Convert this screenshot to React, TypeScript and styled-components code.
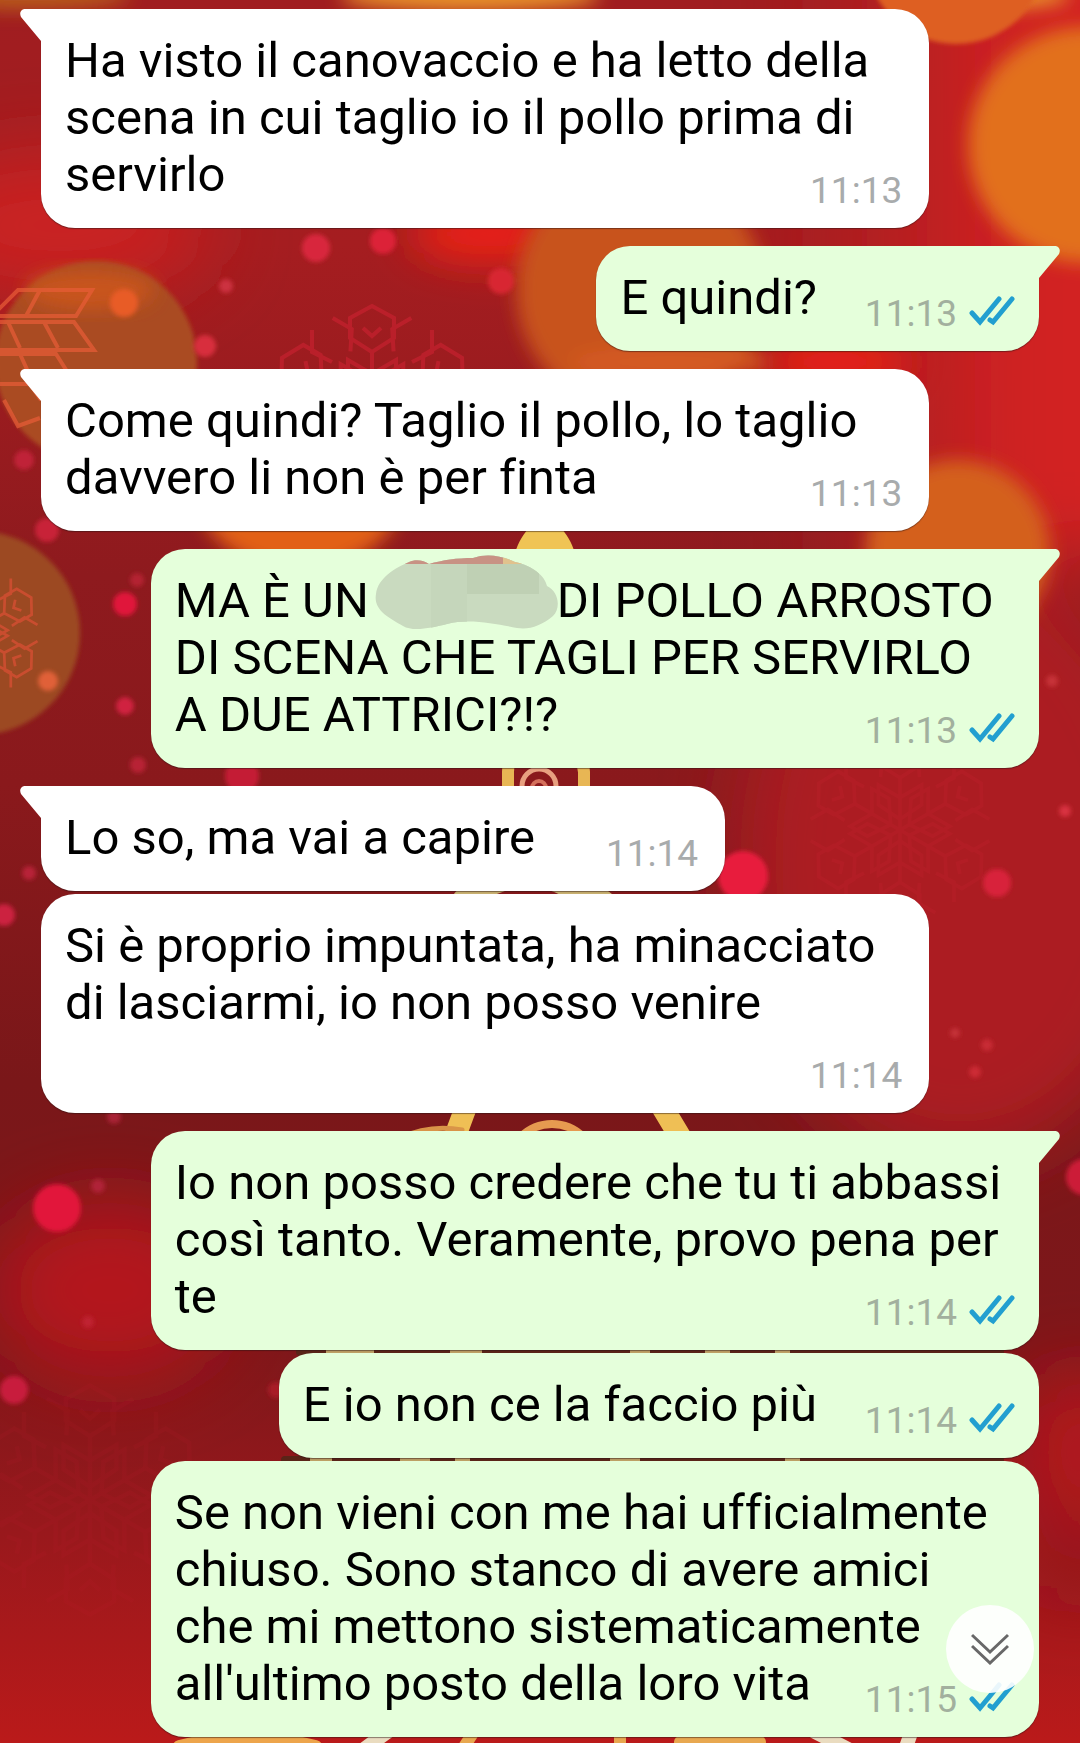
import React from "react";
import styled, { createGlobalStyle, css } from "styled-components";

const GlobalStyle = createGlobalStyle`
  * { box-sizing: border-box; }
  body { margin: 0; background: #a31c20; }
`;

const Screen = styled.main`
  position: relative;
  min-height: 100vh;
  padding: 9px 41px 6px;
  overflow: hidden;
  font-family: Roboto, "Liberation Sans", sans-serif;
`;

const WallpaperArt = styled.svg`
  position: absolute;
  inset: 0;
  width: 100%;
  height: 100%;
`;

const Thread = styled.ol`
  position: relative;
  display: flex;
  flex-direction: column;
  margin: 0;
  padding: 0;
  list-style: none;
`;

const Bubble = styled.li<{ $mine: boolean; $first: boolean; $wide: boolean }>`
  position: relative;
  display: grid;
  align-self: ${(p) => (p.$mine ? "flex-end" : "flex-start")};
  width: ${(p) => (p.$wide ? "89%" : "auto")};
  margin-top: ${(p) => (p.$first ? 18 : 3)}px;
  padding: 23px 24px 25px;
  border-radius: 34px;
  background: ${(p) => (p.$mine ? "#e5ffdb" : "#ffffff")};
  color: #000;
  box-shadow: 0 1px 1px rgba(40, 20, 20, 0.5);
  &:first-child { margin-top: 0; }
  ${(p) =>
    p.$first &&
    (p.$mine
      ? css`border-top-right-radius: 0;`
      : css`border-top-left-radius: 0;`)}
`;

const Tail = styled.svg<{ $mine: boolean }>`
  position: absolute;
  top: 0;
  width: 22px;
  height: 34px;
  ${(p) =>
    p.$mine
      ? css`right: -21px; fill: #e5ffdb;`
      : css`left: -21px; fill: #ffffff; transform: scaleX(-1);`}
`;

const Text = styled.p<{ $reserve: number }>`
  grid-area: 1 / 1;
  margin: 0;
  padding-right: ${(p) => p.$reserve}px;
  font-size: 49px;
  line-height: 57px;
  font-variant-ligatures: none;
  white-space: nowrap;
`;

const Line = styled.span`
  display: block;
  min-height: 57px;
`;

const Meta = styled.div<{ $mine: boolean }>`
  grid-area: 1 / 1;
  place-self: end;
  display: flex;
  align-items: center;
  gap: 12px;
  margin: 0 ${(p) => (p.$mine ? 0 : 3)}px -9px 0;
`;

const Time = styled.time<{ $mine: boolean }>`
  font-size: 37px;
  line-height: 42px;
  color: ${(p) => (p.$mine ? "#a2b09e" : "#a8abac")};
`;

const Ticks = styled.svg`
  width: 46px;
  height: 30px;
  margin-bottom: 6px;
`;

const RedactionArt = styled.svg`
  display: inline-block;
  width: 184px;
  height: 57px;
  margin-left: 4px;
  vertical-align: top;
  overflow: visible;
`;

const ScrollButton = styled.button`
  position: absolute;
  right: 46px;
  bottom: 50px;
  display: grid;
  place-items: center;
  width: 88px;
  height: 88px;
  padding: 0;
  border: 0;
  border-radius: 50%;
  background: rgba(255, 255, 255, 0.9);
`;

const Redaction = () => (
  <RedactionArt viewBox="4 0 184 57" aria-hidden="true">
    <defs>
      <clipPath id="smudge">
        <path d="M7 22 C9 6 26 -4 40 -10 C46 -13 55 -12 60 -8 C74 -12 88 -14 104 -14 C118 -19 134 -16 146 -10 C164 -6 176 4 178 14 C190 20 192 36 184 44 C172 54 160 58 148 56 C128 52 100 46 78 52 C62 56 44 60 34 54 C20 46 4 38 7 22 Z" />
      </clipPath>
    </defs>
    <g clipPath="url(#smudge)">
      <rect x="0" y="-20" width="190" height="82" fill="#c9dabf" />
      <rect x="62" y="-20" width="36" height="82" fill="#c5d6bb" />
      <rect x="98" y="-20" width="72" height="42" fill="#bfd0b4" />
      <rect x="0" y="-20" width="134" height="12" fill="#c89284" />
      <rect x="134" y="-20" width="20" height="12" fill="#e1c28d" />
    </g>
  </RedactionArt>
);

const Flake = ({ x, y, r, color, opacity }: { x: number; y: number; r: number; color: string; opacity: number }) => (
  <g transform={`translate(${x} ${y})`} stroke={color} strokeWidth="4" fill="none" opacity={opacity}>
    {[0, 60, 120, 180, 240, 300].map((a) => (
      <path
        key={a}
        transform={`rotate(${a}) scale(${r / 100})`}
        d="M0 0V-58 M0 -12L-24 -28V-50L0 -36L24 -50V-28Z M0 -58L-22 -72V-92L0 -104L22 -92V-72Z M-40 -48L-60 -58V-80 M40 -48L60 -58V-80 M-9 -82L0 -74L9 -82"
      />
    ))}
  </g>
);

const dots: [number, number, number, string][] = [
  [316, 248, 14, "#d8283c"], [383, 241, 13, "#dc2438"], [501, 281, 13, "#d82832"],
  [226, 286, 7, "#cc3040"], [205, 346, 11, "#d82e3c"], [124, 303, 14, "#e85c28"],
  [47, 530, 12, "#c82238"], [24, 460, 10, "#c02038"], [125, 604, 12, "#e0183a"],
  [137, 580, 7, "#b42030"], [125, 706, 9, "#d02440"], [48, 681, 10, "#e06038"],
  [138, 765, 8, "#b82436"], [242, 776, 17, "#c41c34"], [743, 876, 25, "#e81c3c"],
  [997, 883, 14, "#d8243a"], [1065, 811, 6, "#d83040"], [1052, 681, 6, "#c63038"],
  [955, 1033, 5, "#c43038"], [987, 1045, 6, "#c82c34"], [975, 1072, 6, "#cc2c34"],
  [57, 1208, 24, "#e2143a"], [98, 1186, 7, "#b02038"], [114, 1117, 7, "#a82434"],
  [4, 915, 11, "#cc2040"], [14, 1390, 14, "#c81e3c"], [1084, 1177, 18, "#cc1c38"],
  [29, 873, 7, "#b82438"], [88, 1322, 6, "#c02030"], [276, 1390, 8, "#a81c28"],
];

const Wallpaper = () => (
  <WallpaperArt viewBox="0 0 1080 1743" preserveAspectRatio="xMidYMid slice" aria-hidden="true">
    <defs>
      <linearGradient id="base" x1="0" y1="0" x2="0" y2="1">
        <stop offset="0" stopColor="#a01d20" />
        <stop offset="0.14" stopColor="#a51d20" />
        <stop offset="0.33" stopColor="#8e1a1e" />
        <stop offset="0.45" stopColor="#8a191c" />
        <stop offset="0.62" stopColor="#7a1719" />
        <stop offset="0.77" stopColor="#7e171a" />
        <stop offset="0.88" stopColor="#99181c" />
        <stop offset="1" stopColor="#ba1a1a" />
      </linearGradient>
      <linearGradient id="glow" x1="0" y1="0" x2="1" y2="0">
        <stop offset="0.4" stopColor="#b82020" stopOpacity="0" />
        <stop offset="0.7" stopColor="#cf2022" />
        <stop offset="1" stopColor="#d8231e" />
      </linearGradient>
      <filter id="soft" x="-30%" y="-30%" width="160%" height="160%"><feGaussianBlur stdDeviation="9" /></filter>
      <filter id="flare" x="-60%" y="-60%" width="220%" height="220%"><feGaussianBlur stdDeviation="20" /></filter>
      <filter id="haze" x="-60%" y="-60%" width="220%" height="220%"><feGaussianBlur stdDeviation="38" /></filter>
      <filter id="dot" x="-50%" y="-50%" width="200%" height="200%"><feGaussianBlur stdDeviation="2" /></filter>
    </defs>
    <rect width="1080" height="1743" fill="url(#base)" />
    <g filter="url(#haze)">
      <rect x="480" y="-80" width="740" height="640" fill="url(#glow)" />
      <ellipse cx="960" cy="860" rx="220" ry="300" fill="#ac1c20" />
      <ellipse cx="60" cy="225" rx="150" ry="70" fill="#ca2022" />
      <ellipse cx="110" cy="1290" rx="120" ry="90" fill="#b4181e" />
      <ellipse cx="1080" cy="1450" rx="60" ry="80" fill="#b4181c" />
      <ellipse cx="1080" cy="1560" rx="50" ry="30" fill="#8e191c" />
    </g>
    <g filter="url(#flare)">
      <ellipse cx="490" cy="234" rx="80" ry="28" fill="#ee2012" />
      <ellipse cx="835" cy="362" rx="75" ry="26" fill="#ee2014" />
    </g>
    <g filter="url(#soft)">
      <circle cx="640" cy="290" r="124" fill="#c8521f" />
      <ellipse cx="670" cy="362" rx="100" ry="16" fill="#d45a20" />
      <circle cx="1086" cy="145" r="118" fill="#e2701e" />
      <circle cx="958" cy="552" r="92" fill="#d4601e" />
      <ellipse cx="300" cy="490" rx="104" ry="80" fill="#e26018" />
      <ellipse cx="30" cy="-4" rx="100" ry="14" fill="#b85a1c" />
      <ellipse cx="470" cy="-4" rx="130" ry="16" fill="#e8902a" />
      <ellipse cx="980" cy="-4" rx="90" ry="14" fill="#e8902a" />
    </g>
    <circle cx="956" cy="-46" r="90" fill="#de5f22" filter="url(#dot)" />
    <circle cx="96" cy="362" r="101" fill="#aa4c20" filter="url(#dot)" />
    <circle cx="-22" cy="633" r="102" fill="#9c4824" filter="url(#dot)" />
    <ellipse cx="90" cy="290" rx="64" ry="20" fill="#c8541e" filter="url(#soft)" />
    <Flake x={372} y={410} r={100} color="#dc2438" opacity={0.45} />
    <g fill="none" stroke="#e85c38" strokeWidth="4" opacity="0.7">
      <path d="M-10 318L18 290H92L76 316H-10M-10 322H74L94 350H-10M40 290L26 316M44 322L58 348M8 322L20 348M-10 354H56L70 376M20 354L30 376M-10 384H30L41 400M4 400L18 426L40 418" />
    </g>
    <Flake x={-30} y={633} r={68} color="#e85038" opacity={0.6} />
    <Flake x={900} y={830} r={90} color="#cc2434" opacity={0.2} />
    <Flake x={90} y={1500} r={110} color="#c42030" opacity={0.1} />
    {dots.map(([cx, cy, r, fill]) => (
      <circle key={`${cx}-${cy}`} cx={cx} cy={cy} r={r} fill={fill} filter="url(#dot)" />
    ))}
    <g fill="none" strokeLinecap="round">
      <path d="M545 505C530 530 512 540 514 570H576C578 540 560 530 545 505Z" fill="#f0c455" />
      <path d="M508 800V772Q508 745 545 745T584 772V800" stroke="#e8b654" strokeWidth="12" />
      <circle cx="539" cy="786" r="17" stroke="#e8a080" strokeWidth="5" />
      <circle cx="539" cy="788" r="7" stroke="#d4705c" strokeWidth="4" />
      <path d="M500 880C470 890 460 900 455 920 M556 880C580 890 600 895 610 910" stroke="#c8b070" strokeWidth="24" />
      <path d="M476 1080L450 1150 M646 1080L688 1150" stroke="#efbf55" strokeWidth="22" />
      <circle cx="552" cy="1168" r="44" stroke="#e69a50" strokeWidth="8" />
      <path d="M400 1138Q430 1124 462 1130" stroke="#d99448" strokeWidth="5" />
      <path d="M300 1352H1000 M285 1460H1000" stroke="#5a2418" strokeWidth="8" />
      <path d="M326 1352H374 M450 1352H482 M630 1352H650 M705 1352H730 M775 1352H790 M310 1460H332 M400 1460H430 M455 1460H470 M610 1460H640 M785 1460H800" stroke="#bda065" strokeWidth="8" strokeLinecap="butt" />
      <path d="M180 1748Q245 1730 315 1748" stroke="#eda54c" strokeWidth="16" />
      <path d="M360 1752L390 1730 M815 1732L850 1750 M905 1750L912 1730" stroke="#eadcc0" strokeWidth="14" />
      <path d="M462 1750L475 1730 M620 1750V1730 M680 1742H760" stroke="#e8a850" strokeWidth="12" />
    </g>
  </WallpaperArt>
);

type Message = {
  mine?: boolean;
  first?: boolean;
  lines: React.ReactNode[];
  time: string;
};

const messages: Message[] = [
  { first: true, time: "11:13", lines: ["Ha visto il canovaccio e ha letto della", "scena in cui taglio io il pollo prima di", "servirlo"] },
  { mine: true, first: true, time: "11:13", lines: ["E quindi?"] },
  { first: true, time: "11:13", lines: ["Come quindi? Taglio il pollo, lo taglio", "davvero li non è per finta"] },
  { mine: true, first: true, time: "11:13", lines: [<>MA È UN<Redaction />DI POLLO ARROSTO</>, "DI SCENA CHE TAGLI PER SERVIRLO", "A DUE ATTRICI?!?"] },
  { first: true, time: "11:14", lines: ["Lo so, ma vai a capire"] },
  { time: "11:14", lines: ["Si è proprio impuntata, ha minacciato", "di lasciarmi, io non posso venire", ""] },
  { mine: true, first: true, time: "11:14", lines: ["Io non posso credere che tu ti abbassi", "così tanto. Veramente, provo pena per", "te"] },
  { mine: true, time: "11:14", lines: ["E io non ce la faccio più"] },
  { mine: true, time: "11:15", lines: ["Se non vieni con me hai ufficialmente", "chiuso. Sono stanco di avere amici", "che mi mettono sistematicamente", "all'ultimo posto della loro vita"] },
];

const ChatMessage = ({ mine = false, first = false, lines, time }: Message) => {
  const single = lines.length === 1;
  return (
    <Bubble $mine={mine} $first={first} $wide={!single}>
      {first && (
        <Tail $mine={mine} viewBox="0 0 22 34" aria-hidden="true">
          <path d="M0 0H17C21 0 23 4 21 8L1 32V34H0Z" />
        </Tail>
      )}
      <Text $reserve={single ? (mine ? 198 : 166) : 0}>
        {lines.map((line, i) => (
          <Line key={i}>{line}</Line>
        ))}
      </Text>
      <Meta $mine={mine}>
        <Time $mine={mine}>{time}</Time>
        {mine && (
          <Ticks viewBox="0 0 46 30" fill="none" stroke="#229fd0" strokeWidth="5" strokeLinecap="round" role="img" aria-label="Letto">
            <path d="M3 17L11 26L30 3M21 24L24 26L43 3" />
          </Ticks>
        )}
      </Meta>
    </Bubble>
  );
};

export default function App() {
  return (
    <Screen>
      <GlobalStyle />
      <Wallpaper />
      <Thread>
        {messages.map((m, i) => (
          <ChatMessage key={i} {...m} />
        ))}
      </Thread>
      <ScrollButton type="button" aria-label="Vai in fondo">
        <svg width="38" height="32" viewBox="0 0 38 32" fill="none" stroke="#686868" strokeWidth="3">
          <path d="M1 2L19 19L37 2M1 13L19 30L37 13" />
        </svg>
      </ScrollButton>
    </Screen>
  );
}
